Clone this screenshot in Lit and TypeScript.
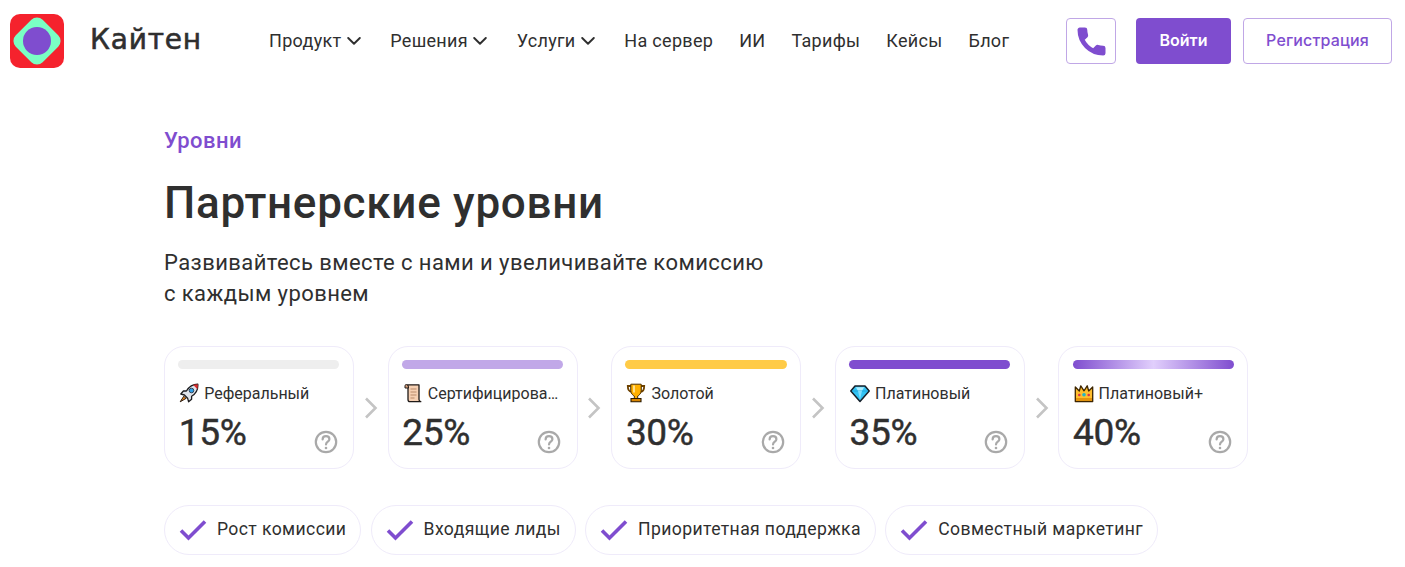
import { LitElement, html, css, svg } from "lit";
import { customElement } from "lit/decorators.js";

const chevron = html`<svg class="chev" width="14" height="8" viewBox="0 0 14 8" fill="none"><path d="M1.200 1 7 6.700 12.800 1" stroke="#2f2f2f" stroke-width="1.900" stroke-linecap="round" stroke-linejoin="round"/></svg>`;

const emojis: Record<string, unknown> = {
  rocket: svg`<path d="M18.800 1.200c-4.800.1-8.800 2.500-11.400 6.800L4.400 8 1.800 11l3.600 1 3.200 3.200 1 3.600 3-2.600V13.200c4.300-2.600 6.600-6.600 6.200-12z" fill="#dfe3ea" stroke="#1d1d1f" stroke-width="1.300" stroke-linejoin="round"/><path d="M14 1.800l4.800-.6-.3 5z" fill="#d92b2b"/><circle cx="12.500" cy="7.500" r="2.300" fill="#2f9fe8" stroke="#27384a" stroke-width=".9"/><path d="M4.800 13.200 1.200 18.800l5.800-3.400z" fill="#f28a1c" stroke="#2a1a0e" stroke-width="1"/>`,
  scroll: svg`<path d="M4.500 1.800H16v14.700c0 1.200.8 2 1.800 2.200H7c-1.200 0-2-.9-2-2.200V4.200c0-1-.2-1.800-.5-2.400z" fill="#f6d0b3" stroke="#1f1a18" stroke-width="1.300" stroke-linejoin="round"/><path d="M2 2.800C2 1.800 3 1.200 4 1.800S5.500 3.500 5.500 5H2z" fill="#dba37f" stroke="#1f1a18" stroke-width="1"/><path d="M7.500 6h6M7.500 9h6M7.500 12h6M7.500 15h4" stroke="#b98a6b" stroke-width="1"/>`,
  trophy: svg`<path d="M1.800 3h3.700v5.800C3 8.800 1.800 6.200 1.800 3zM18.200 3h-3.700v5.800c2.500 0 3.700-2.600 3.700-5.800z" fill="none" stroke="#6e4200" stroke-width="1.800"/><path d="M4.800 1.200h10.400v6.600c0 3-2.400 4.600-3.500 5.200v2.600H8.300V13c-1.100-.6-3.500-2.200-3.500-5.200z" fill="#ffb000" stroke="#4f3000" stroke-width="1"/><path d="M7 2.500h2v7H7z" fill="#ffe08a"/><path d="M5 15.500h10v3.300H5z" fill="#d98500" stroke="#2a1a00" stroke-width="1.100"/>`,
  gem: svg`<path d="M5 3h10l4.200 5L10 18.500.8 8z" fill="#33c3f4" stroke="#17202a" stroke-width="1.500" stroke-linejoin="round"/><path d="M5.800 4.200 8 8h4l2.200-3.800z" fill="#aeeeff"/><path d="M2 8h16" stroke="#1a9fd6" stroke-width=".8"/><path d="M8 8l2 8.500L12 8z" fill="#7fe0ff"/>`,
  crown: svg`<path d="M1.300 4l4 4L6.800 2.800 10 7.800l3.200-5L14.700 8l4-4v14.500H1.300z" fill="#ffbe2e" stroke="#3d2500" stroke-width="1.300" stroke-linejoin="round"/><path d="M2 15h16v2.800H2z" fill="#e5930c"/><circle cx="10" cy="11.800" r="1.800" fill="#1fb5c9"/><circle cx="5.300" cy="12" r="1.300" fill="#d8334a"/><circle cx="14.700" cy="12" r="1.300" fill="#d8334a"/>`,
};

const levels = [
  { bar: "b1", em: "rocket", name: "Реферальный", pct: "15%" },
  { bar: "b2", em: "scroll", name: "Сертифицированный", pct: "25%" },
  { bar: "b3", em: "trophy", name: "Золотой", pct: "30%" },
  { bar: "b4", em: "gem", name: "Платиновый", pct: "35%" },
  { bar: "b5", em: "crown", name: "Платиновый+", pct: "40%" },
];

const pills = ["Рост комиссии", "Входящие лиды", "Приоритетная поддержка", "Совместный маркетинг"];

@customElement("app-root")
export class AppRoot extends LitElement {
  static styles = css`
    :host { display: block; width: 1405px; height: 567px; overflow: hidden; background: #fff; color: #2f2f2f; font-family: Roboto, "Noto Sans", sans-serif; }
    * { box-sizing: border-box; }
    header { height: 82px; display: flex; align-items: center; padding: 0 13px 0 10px; }
    .logo { flex: none; display: block; }
    .brand { font-family: "DejaVu Sans", sans-serif; font-size: 28px; letter-spacing: 0.8px; margin-left: 26px; width: 179px; color: #2f2f2f; line-height: 1; -webkit-text-stroke: 0.6px #2f2f2f; padding-bottom: 2px; }
    nav { display: flex; align-items: center; gap: 26px; font-size: 18px; letter-spacing: 0.3px; padding-bottom: 2px; }
    nav a { display: flex; align-items: center; gap: 5.500px; color: #2f2f2f; }
    .chev { margin-right: 3.300px; margin-top: 2px; }
    .actions { margin-left: auto; display: flex; align-items: center; }
    .btn { height: 46px; border-radius: 4px; display: flex; align-items: center; justify-content: center; font-family: Inter, sans-serif; font-size: 16px; font-weight: 600; padding-bottom: 2px; }
    .phone { width: 50px; border: 1px solid #c0a7e6; margin-right: 20px; padding-bottom: 0; }
    .login { width: 95px; background: #7f4dcf; color: #fff; margin-right: 12px; }
    .reg { width: 149px; border: 1px solid #c0a7e6; color: #7f4dcf; font-weight: 500; letter-spacing: 0.15px; }
    main { padding: 0 0 0 164px; }
    .eyebrow { margin-top: 45px; font-size: 22px; letter-spacing: 0.44px; font-weight: 500; line-height: 28px; color: #7f4dcf; }
    h1 { margin: 22px 0 0; font-size: 44px; letter-spacing: 0.72px; font-weight: 500; line-height: 52px; color: #2f2f2f; }
    .sub { margin: 18px 0 0; font-size: 22px; letter-spacing: 0.42px; line-height: 31px; color: #2f2f2f; width: 640px; }
    .levels { margin-top: 37px; display: flex; align-items: center; }
    .card { width: 190px; height: 123px; border: 1px solid #efebfa; border-radius: 20px; padding: 13px 13.600px 0 13.200px; display: flex; flex-direction: column; position: relative; }
    .bar { height: 9px; border-radius: 5px; }
    .b1 { background: #eeeeee; }
    .b2 { background: #c1a8e8; }
    .b3 { background: #ffcb47; }
    .b4 { background: #7f4dcf; }
    .b5 { background: linear-gradient(90deg, #7f4dcf 0%, #e1cffc 50%, #7f4dcf 100%); }
    .name { margin-top: 12px; height: 24px; display: flex; align-items: center; gap: 5px; padding-left: 1px; font-size: 16px; white-space: nowrap; }
    .name span { overflow: hidden; text-overflow: ellipsis; }
    .name svg { flex: none; }
    .pct { margin-top: 7px; padding-left: 0.500px; font-size: 37px; font-weight: 400; -webkit-text-stroke: 0.45px #2f2f2f; line-height: 42px; letter-spacing: -0.3px; color: #2f2f2f; }
    .help { position: absolute; right: 15.500px; bottom: 14px; }
    .arrow { width: 33.600px; display: flex; justify-content: center; }
    .pills { margin-top: 36px; display: flex; gap: 9.300px; }
    .pill { height: 50px; border: 1px solid #efebfa; border-radius: 25px; padding: 0 14px 2px; display: flex; align-items: center; gap: 10px; font-size: 17.600px; letter-spacing: 0.38px; white-space: nowrap; }
    .pill svg { margin-top: 1px; }
  `;

  render() {
    return html`
      <header>
        <svg class="logo" width="54" height="54" viewBox="0 0 54 54">
          <rect width="54" height="54" rx="10" fill="#f5222d"/>
          <rect x="8" y="8" width="38" height="38" rx="8" transform="rotate(45 27 27)" fill="#7affc4"/>
          <circle cx="27" cy="27" r="14" fill="#7f4dcf"/>
        </svg>
        <div class="brand">Кайтен</div>
        <nav>
          <a>Продукт ${chevron}</a><a>Решения ${chevron}</a><a>Услуги ${chevron}</a>
          <a>На сервер</a><a>ИИ</a><a>Тарифы</a><a>Кейсы</a><a>Блог</a>
        </nav>
        <div class="actions">
          <div class="btn phone">
            <svg width="35" height="35" viewBox="0 0 24 24"><path fill="#7f4dcf" stroke="#7f4dcf" stroke-width="1.200" stroke-linejoin="round" d="M6.620 10.790c1.440 2.830 3.760 5.140 6.590 6.590l2.200-2.200c.27-.27.67-.36 1.020-.24 1.120.37 2.330.57 3.570.57.550 0 1 .45 1 1V20c0 .55-.45 1-1 1C10.610 21 3 13.390 3 4c0-.55.450-1 1-1h3.500c.55 0 1 .45 1 1 0 1.250.2 2.450.57 3.570.11.350.03.740-.25 1.020l-2.200 2.200z"/></svg>
          </div>
          <div class="btn login">Войти</div>
          <div class="btn reg">Регистрация</div>
        </div>
      </header>
      <main>
        <div class="eyebrow">Уровни</div>
        <h1>Партнерские уровни</h1>
        <p class="sub">Развивайтесь вместе с нами и увеличивайте комиссию<br>с каждым уровнем</p>
        <div class="levels">
          ${levels.map((l, i) => html`
            <div class="card">
              <div class="bar ${l.bar}"></div>
              <div class="name"><svg width="20" height="20" viewBox="0 0 20 20">${emojis[l.em]}</svg><span>${l.name}</span></div>
              <div class="pct">${l.pct}</div>
              <svg class="help" width="24" height="24" viewBox="0 0 24 24" fill="none"><circle cx="12" cy="12" r="10.200" stroke="#a9a9a9" stroke-width="2.200"/><path d="M8.600 9.500c0-2 1.500-3.300 3.400-3.300s3.400 1.300 3.400 3c0 2.400-3.400 2.500-3.400 5.200" stroke="#a9a9a9" stroke-width="2.200" stroke-linecap="round"/><circle cx="12" cy="18" r="1.300" fill="#a9a9a9"/></svg>
            </div>
            ${i < levels.length - 1 ? html`<div class="arrow"><svg width="14" height="22" viewBox="0 0 14 22" fill="none"><path d="M2 1.500l9.500 9.500L2 20.500" stroke="#c4c4c4" stroke-width="2.600"/></svg></div>` : ""}
          `)}
        </div>
        <div class="pills">
          ${pills.map((p) => html`<div class="pill"><svg width="28" height="22" viewBox="0 0 28 22" fill="none"><path d="M2 11.500l7.500 7.500L26 2.500" stroke="#7f4dcf" stroke-width="3.600"/></svg>${p}</div>`)}
        </div>
      </main>
    `;
  }
}
